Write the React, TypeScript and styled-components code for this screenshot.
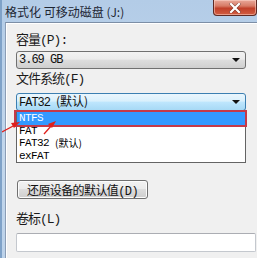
import React from "react";
import styled, { createGlobalStyle } from "styled-components";

const Global = createGlobalStyle`
  html, body { margin: 0; padding: 0; }
  body { width: 257px; height: 258px; overflow: hidden; background: #f0f0f0; }
`;

const MONO_CJK = `"Liberation Mono", "Noto Sans CJK SC", monospace`;

const Window = styled.div`
  position: relative;
  width: 257px;
  height: 258px;
  display: flex;
  flex-direction: column;
  background: linear-gradient(180deg, #b3cce7 0%, #c3d7ec 60%, #bcd2ea 100%);
  border-left: 2px solid #7fa2c8;
  box-sizing: border-box;
  overflow: hidden;
`;

const TitleBar = styled.div`
  height: 22px;
  display: flex;
  align-items: flex-start;
  flex-shrink: 0;
`;

const Title = styled.div`
  font-family: "Noto Sans CJK SC", sans-serif;
  font-size: 12px;
  line-height: 14px;
  color: #1d2633;
  padding: 5px 0 0 3px;
  white-space: nowrap;
`;

const CloseButton = styled.div`
  margin-left: auto;
  width: 44px;
  height: 16px;
  box-sizing: border-box;
  border: 1px solid #5e2a24;
  border-top: none;
  border-radius: 0 0 4px 4px;
  background: linear-gradient(180deg, #e9a99a 0%, #d77b66 40%, #c1402a 55%, #d25e42 100%);
  display: flex;
  align-items: center;
  justify-content: center;
  box-shadow: inset 0 0 0 1px rgba(255, 220, 210, 0.5);
`;

const Body = styled.div`
  flex: 1;
  margin-left: 3px;
  background: #f0f0f0;
  border-top: 1px solid #7c8ea6;
  border-left: 1px solid #8b9db5;
  box-shadow: inset 1px 1px 0 #ffffff;
  padding: 10px 10px 0 10px;
  display: flex;
  flex-direction: column;
  align-items: flex-start;
`;

const Label = styled.div<{ $top?: number }>`
  font-family: ${MONO_CJK};
  font-size: 13px;
  line-height: 16px;
  letter-spacing: -1px;
  color: #1b1b1b;
  margin-top: ${(p) => p.$top ?? 0}px;
  white-space: nowrap;
`;

const Select = styled.div<{ $focused?: boolean; $top?: number }>`
  margin-top: ${(p) => p.$top ?? 0}px;
  width: 230px;
  height: 18px;
  box-sizing: border-box;
  border: 1px solid ${(p) => (p.$focused ? "#3c7fb1" : "#707070")};
  border-radius: 3px;
  background: ${(p) =>
    p.$focused
      ? "linear-gradient(180deg, #eaf6fd 0%, #d9f0fc 45%, #bee6fd 50%, #a7d9f5 100%)"
      : "linear-gradient(180deg, #f2f2f2 0%, #ebebeb 45%, #dddddd 50%, #cfcfcf 100%)"};
  display: flex;
  align-items: center;
  padding-left: 2px;
  font-family: ${MONO_CJK};
  font-size: 12px;
  letter-spacing: -1px;
  color: #111;
`;

const SelectText = styled.span`
  flex: 1;
  line-height: 14px;
  white-space: nowrap;
`;

const Caret = styled.span`
  width: 0;
  height: 0;
  margin-right: 5px;
  border-left: 4px solid transparent;
  border-right: 4px solid transparent;
  border-top: 4px solid #111;
`;

const Cjk = styled.span<{ $size?: number }>`
  font-family: "Noto Sans CJK SC", sans-serif;
  font-size: ${(p) => p.$size ?? 12}px;
  letter-spacing: 0;
  margin-left: 6px;
`;

const SelectGroup = styled.div`
  position: relative;
  margin-top: 5px;
`;

const DropList = styled.div`
  position: absolute;
  left: 0;
  top: 17px;
  width: 230px;
  box-sizing: border-box;
  background: #ffffff;
  border: 1px solid #646464;
  padding: 1px 0 0 0;
  z-index: 2;
`;

const Option = styled.div<{ $active?: boolean }>`
  height: 12.5px;
  line-height: 12.5px;
  padding-left: 2px;
  font-family: "Liberation Mono", monospace;
  font-size: 11px;
  letter-spacing: -0.6px;
  color: ${(p) => (p.$active ? "#ffffff" : "#000000")};
  background: ${(p) => (p.$active ? "#3399ff" : "transparent")};
  white-space: nowrap;
  position: relative;
  display: flex;
  align-items: center;
`;

const Highlight = styled.div`
  position: absolute;
  left: -3px;
  right: -2px;
  top: -2px;
  bottom: -2px;
  border: 2px solid #c53a48;
  pointer-events: none;
`;

const HiddenRow = styled.div`
  height: 52px;
`;

const Button = styled.div`
  margin-top: 17px;
  margin-left: 1px;
  width: 131px;
  height: 19px;
  box-sizing: border-box;
  border: 1px solid #707070;
  border-radius: 3px;
  background: linear-gradient(180deg, #f2f2f2 0%, #ebebeb 45%, #dddddd 50%, #cfcfcf 100%);
  box-shadow: inset 0 0 0 1px #fcfcfc;
  display: flex;
  align-items: center;
  justify-content: center;
  font-family: ${MONO_CJK};
  font-size: 12px;
  letter-spacing: -0.6px;
  color: #111;
  white-space: nowrap;
`;

const Input = styled.div`
  margin-top: 5px;
  width: 240px;
  height: 19px;
  box-sizing: border-box;
  background: #ffffff;
  border: 1px solid #c4c8ce;
  border-top-color: #abadb3;
  border-radius: 2px;
`;

const Arrows = styled.svg`
  position: absolute;
  left: 0;
  top: 0;
  pointer-events: none;
  z-index: 5;
`;

export default function App() {
  return (
    <>
      <Global />
      <Window>
        <TitleBar>
          <Title>格式化 可移动磁盘 (J:)</Title>
          <CloseButton>
            <svg width="12" height="10" viewBox="0 0 12 10">
              <path d="M2 1 L10 9 M10 1 L2 9" stroke="#3a1410" strokeWidth="3.2" strokeLinecap="square" opacity="0.5" />
              <path d="M2 1 L10 9 M10 1 L2 9" stroke="#ffffff" strokeWidth="2.2" strokeLinecap="square" />
            </svg>
          </CloseButton>
        </TitleBar>
        <Body>
          <Label>容量(P):</Label>
          <Select $top={2}>
            <SelectText>3.69 GB</SelectText>
            <Caret />
          </Select>
          <Label $top={3}>文件系统(F)</Label>
          <SelectGroup>
            <Select $focused>
              <SelectText>
                FAT32<Cjk>(默认)</Cjk>
              </SelectText>
              <Caret />
            </Select>
            <DropList>
              <Option $active>
                NTFS
                <Highlight />
              </Option>
              <Option>FAT</Option>
              <Option>
                FAT32<Cjk $size={10}>(默认)</Cjk>
              </Option>
              <Option>exFAT</Option>
            </DropList>
            <HiddenRow />
          </SelectGroup>
          <Button>还原设备的默认值(D)</Button>
          <Label $top={13}>卷标(L)</Label>
          <Input />
        </Body>
        <Arrows width="257" height="258" viewBox="0 0 257 258">
          <path d="M0 132 L13 125" stroke="#e0201c" strokeWidth="1.3" />
          <polygon points="18,122 9,123 12,128" fill="#e0201c" />
          <path d="M42 134 L50 125" stroke="#e0201c" strokeWidth="1.3" />
          <polygon points="54,121 46,124 50,128" fill="#e0201c" />
        </Arrows>
      </Window>
    </>
  );
}
